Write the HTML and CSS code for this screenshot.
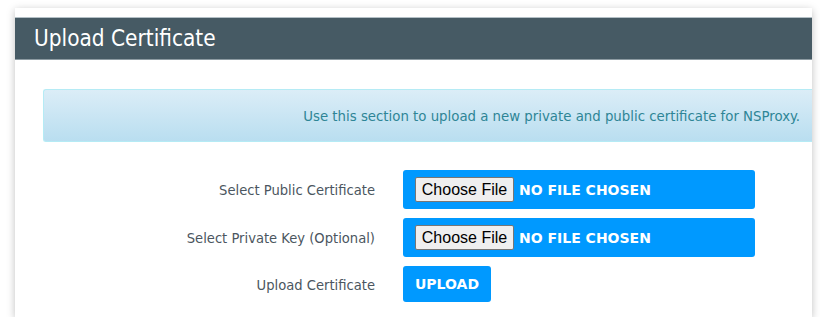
FILE: index.html
```html
<!DOCTYPE html>
<html lang="en">
<head>
    <meta charset="UTF-8">
    <meta name="viewport" content="width=device-width, initial-scale=1.0">
    <link rel="stylesheet" href="styles.css">
</head>
<body>

    <div class="panel">
        <div class="panel-header">Upload Certificate</div>

        <div class="info-box">
            Use this section to upload a new private and public certificate for NSProxy.
        </div>

        <form class="upload-form">
            <label class="field-label" for="public-cert">Select Public Certificate</label>
            <input class="file-input" type="file" id="public-cert">

            <label class="field-label" for="private-key">Select Private Key (Optional)</label>
            <input class="file-input" type="file" id="private-key">

            <span class="field-label">Upload Certificate</span>
            <div><button type="button" class="upload-button">Upload</button></div>
        </form>
    </div>

</body>
</html>
```

FILE: styles.css
```css
body {
    margin: 0;
    font-family: 'DejaVu Sans Condensed', 'DejaVu Sans', sans-serif;
    background-color: #fff;
    color: #4b5660;
}

.panel {
    width: 797px;
    margin: 8px 0 0 15px;
    padding: 9px 0 15px;
    box-sizing: border-box;
    background-color: #fff;
    box-shadow: 0 2px 8px rgba(0, 0, 0, 0.25);
}

.panel-header {
    height: 43px;
    box-sizing: border-box;
    padding-left: 19px;
    background-color: #465a64;
    border-top: 1px solid #b4c0c6;
    border-bottom: 1px solid #8d9ba2;
    color: #fff;
    font-size: 22.4px;
    line-height: 41px;
}

.info-box {
    margin: 29px 0 28px 28px;
    height: 53px;
    box-sizing: border-box;
    padding-right: 12px;
    background: linear-gradient(to bottom, #dbedf7, #b9def0);
    border: 1px solid #b5ebf5;
    border-right: none;
    border-radius: 3px 0 0 3px;
    color: #2e8596;
    font-size: 14.8px;
    line-height: 51px;
    text-align: right;
}

/* label column + control column */
.upload-form {
    display: grid;
    grid-template-columns: 360px 352px;
    column-gap: 28px;
    row-gap: 9px;
    align-items: center;
}

.field-label {
    text-align: right;
    font-size: 14.6px;
}

.file-input {
    display: block;
    width: 352px;
    height: 39px;
    box-sizing: border-box;
    padding: 7px 12px;
    background-color: #0099ff;
    border-radius: 3px;
    color: #fff;
    font-family: 'DejaVu Sans', sans-serif;
    font-size: 14px;
    font-weight: bold;
    text-transform: uppercase;
}

.file-input::file-selector-button {
    width: 99px;
    height: 25px;
    margin-right: 5px;
    padding: 0;
    background-color: #efefef;
    border: 1px solid #767676;
    border-radius: 2px;
    color: #000;
    font-family: 'Liberation Sans', Arial, sans-serif;
    font-size: 16px;
    font-weight: normal;
    text-transform: none;
}

.upload-button {
    display: block;
    width: 88px;
    height: 36px;
    background-color: #0099ff;
    border: none;
    border-radius: 3px;
    color: #fff;
    font-family: 'DejaVu Sans', sans-serif;
    font-size: 14px;
    font-weight: bold;
    text-transform: uppercase;
    cursor: pointer;
}
```
